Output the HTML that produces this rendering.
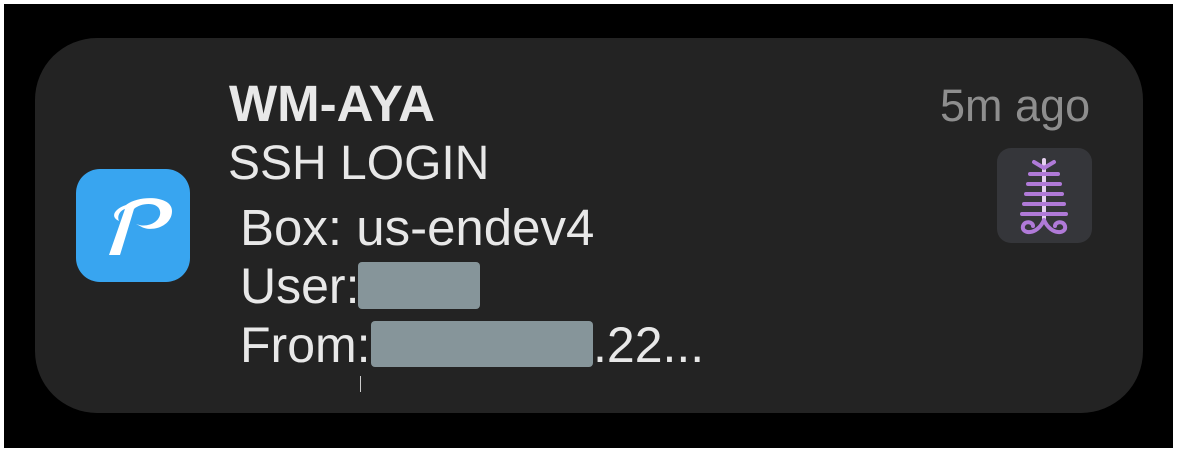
<!DOCTYPE html>
<html><head><style>
body{margin:0;width:1178px;height:452px;background:#fff;overflow:hidden;font-family:"Liberation Sans",Arial,sans-serif}
.outer{position:absolute;left:4px;top:4px;width:1169px;height:444px;background:#000}
.card{position:absolute;left:35px;top:38px;width:1108px;height:375px;background:#232323;border-radius:62px}
.t{position:absolute;color:#e8e8e8;white-space:nowrap;line-height:1}
.icon{position:absolute;left:76px;top:169px;width:114px;height:113px;background:#38a5f0;border-radius:24px}
.r{position:absolute;left:997px;top:148px;width:95px;height:95px;background:#35363a;border-radius:14px}
.blur{position:absolute;background:#86959a;border-radius:4px}
</style></head><body>
<div class="outer"></div>
<div class="card"></div>
<div class="icon"><svg width="114" height="113" viewBox="0 0 114 113"><path d="M50 36 C62 26 96 26 96 42 C96 58 74 64 64 57 L60 55 C72 60 86 52 84 42 C82 32 64 34 58 40 L44 86 L33 86 L49 40 C43 42 41 48 43 52 C34 48 38 40 50 36Z" fill="#fff"/></svg></div>
<div class="r"><svg width="95" height="95" viewBox="0 0 95 95"><g stroke="#b07ad8" stroke-width="4" fill="none" stroke-linecap="round"><path d="M47 12 V72" stroke="#e6d0f0"/><path d="M37 14 L47 20 L57 14 M33 26 H61 M31 36 H63 M29 46 H65 M27 56 H67 M25 66 H69"/><path d="M47 72 C40 88 24 86 26 78 C28 72 36 74 36 78"/><path d="M47 72 C54 88 70 86 68 78 C66 72 58 74 58 78"/></g></svg></div>
<div class="t" style="left:229px;top:78px;font-size:51px;font-weight:bold">WM-AYA</div>
<div class="t" style="left:940px;top:83px;font-size:45px;color:#8e8e8e">5m ago</div>
<div class="t" style="left:228px;top:140px;font-size:48px">SSH LOGIN</div>
<div class="t" style="left:240px;top:202px;font-size:51px">Box: us-endev4</div>
<div class="t" style="left:240px;top:261px;font-size:50px">User:</div>
<div class="blur" style="left:358px;top:262px;width:122px;height:47px"></div>
<div class="t" style="left:240px;top:320px;font-size:50px">From:</div>
<div class="blur" style="left:371px;top:321px;width:222px;height:46px"></div>
<div class="t" style="left:593px;top:320px;font-size:50px">.22...</div>
<div style="position:absolute;left:360px;top:376px;width:1px;height:16px;background:#ccc"></div>
</body></html>
